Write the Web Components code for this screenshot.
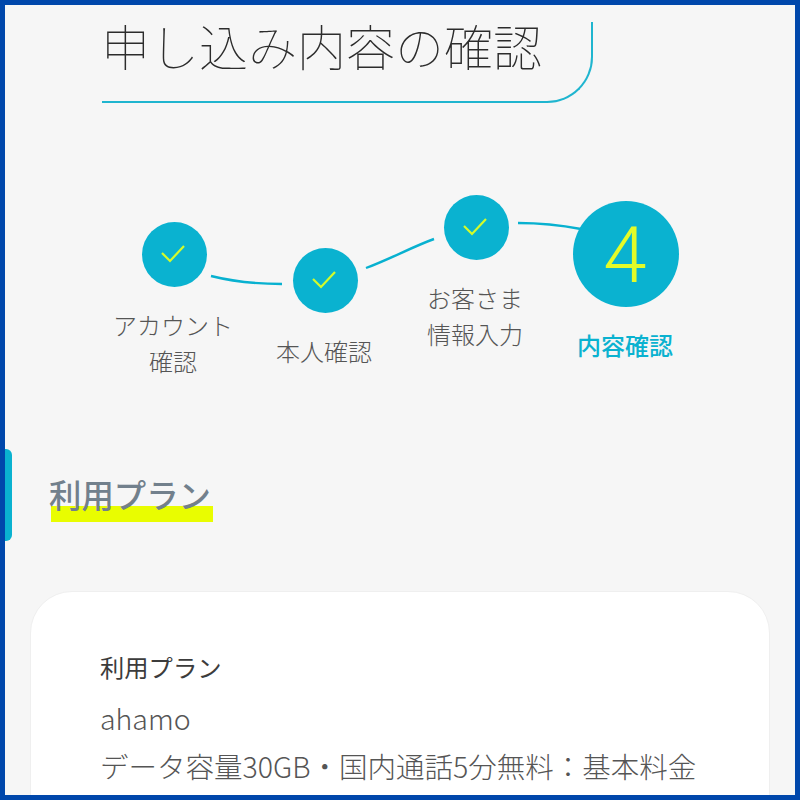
<!DOCTYPE html>
<html lang="ja">
<head>
<meta charset="utf-8">
<title>申し込み内容の確認</title>
<style>
  html, body { margin: 0; height: 100%; overflow: hidden; background: #f6f6f6; }
  body { font-family: "Noto Sans CJK JP", "Noto Sans", sans-serif; }
</style>
</head>
<body>
<app-frame>
  <page-title>申し込み内容の確認</page-title>
  <step-track>
    <step-node cx="174" cy="254" done><span>アカウント<br>確認</span></step-node>
    <step-node cx="325" cy="280" done><span>本人確認</span></step-node>
    <step-node cx="476" cy="227" done><span>お客さま<br>情報入力</span></step-node>
    <step-node cx="626" cy="254" num="4"><span>内容確認</span></step-node>
  </step-track>
  <section-heading>利用プラン</section-heading>
  <plan-card heading="利用プラン">
    <div>ahamo</div>
    <div>データ容量30GB・国内通話5分無料：基本料金</div>
  </plan-card>
</app-frame>

<script>
class AppFrame extends HTMLElement {
  connectedCallback() {
    this.attachShadow({ mode: 'open' });
    this.shadowRoot.innerHTML = `
      <style>
        :host {
          display: block;
          box-sizing: border-box;
          width: 800px;
          height: 800px;
          overflow: hidden;
          border: 5px solid #0047ab;
          background: #f6f6f6;
        }
      </style>
      <slot></slot>
    `;
  }
}

class PageTitle extends HTMLElement {
  connectedCallback() {
    this.attachShadow({ mode: 'open' });
    this.shadowRoot.innerHTML = `
      <style>
        :host {
          display: block;
          box-sizing: border-box;
          width: 491px;
          height: 81px;
          margin: 17px 0 0 97px;
          border-right: 2px solid #1fb5cf;
          border-bottom: 2px solid #1fb5cf;
          border-bottom-right-radius: 46px;
          font-size: 49px;
          font-weight: 100;
          line-height: 46px;
          text-indent: -1px;
          color: #2c2c2c;
          white-space: nowrap;
        }
      </style>
      <slot></slot>
    `;
  }
}

class StepTrack extends HTMLElement {
  connectedCallback() {
    this.attachShadow({ mode: 'open' });
    this.shadowRoot.innerHTML = `
      <style>
        :host {
          display: block;
          position: relative;
          height: 346px;
        }
        svg { position: absolute; left: -5px; top: -103px; }
      </style>
      <svg width="800" height="450" viewBox="0 0 800 450" fill="none" stroke="#08b1d0" stroke-width="2.4">
        <path d="M211 276 C235 282 258 284 282 284"/>
        <path d="M366 268 C390 259 412 247 434 239"/>
        <path d="M518 223 C540 223 560 225 581 229"/>
      </svg>
      <slot></slot>
    `;
  }
}

class StepNode extends HTMLElement {
  connectedCallback() {
    const cx = +this.getAttribute('cx');
    const cy = +this.getAttribute('cy');
    const num = this.getAttribute('num');
    const r = num ? 53 : 32.5;
    this.attachShadow({ mode: 'open' });
    this.shadowRoot.innerHTML = `
      <style>
        :host {
          display: flex;
          flex-direction: column;
          align-items: center;
          position: absolute;
          left: ${cx - 5 - 90}px;
          top: ${cy - 103 - r}px;
          width: 180px;
        }
        .dot {
          display: flex;
          align-items: center;
          justify-content: center;
          box-sizing: border-box;
          width: ${r * 2}px;
          height: ${r * 2}px;
          padding: ${num ? 3 : 0}px 2px 0 0;
          border-radius: 50%;
          background: #0ab2d0;
          color: #e3fb28;
          font-family: Roboto, sans-serif;
          font-size: 78px;
          font-weight: 300;
          line-height: 1;
        }
        .label {
          margin-top: 20px;
          margin-left: -2px;
          font-size: 24px;
          line-height: 36.5px;
          text-align: center;
          font-weight: ${num ? 500 : 300};
          color: ${num ? '#0ab2d0' : '#555'};
        }
      </style>
      <div class="dot">${num || `
        <svg width="24" height="18" viewBox="0 0 24 18" fill="none" stroke="#d4fb2a" stroke-width="2.2">
          <path d="M1 8 L9 16 L23 1"/>
        </svg>`}</div>
      <div class="label"><slot></slot></div>
    `;
  }
}

class SectionHeading extends HTMLElement {
  connectedCallback() {
    this.attachShadow({ mode: 'open' });
    this.shadowRoot.innerHTML = `
      <style>
        :host {
          display: flex;
          align-items: center;
          gap: 37px;
          height: 92px;
        }
        .tab {
          width: 7px;
          height: 92px;
          border-radius: 0 6px 6px 0;
          background: #0ab2d0;
        }
        .text {
          width: 164px;
          margin-top: 4px;
          font-size: 32.4px;
          line-height: 46px;
          font-weight: 500;
          color: #72808c;
          white-space: nowrap;
          background: linear-gradient(#e9fd00, #e9fd00) no-repeat 2px 35px / 163px 16px;
          padding-bottom: 6px;
        }
      </style>
      <div class="tab"></div>
      <div class="text"><slot></slot></div>
    `;
  }
}

class PlanCard extends HTMLElement {
  connectedCallback() {
    this.attachShadow({ mode: 'open' });
    this.shadowRoot.innerHTML = `
      <style>
        :host {
          display: block;
          box-sizing: border-box;
          width: 740px;
          height: 300px;
          margin: 50px 0 0 25px;
          padding: 57px 40px 0 69px;
          border: 1px solid #efefef;
          border-radius: 42px;
          background: #fff;
        }
        h3 {
          margin: 0 0 9px;
          font-size: 24.3px;
          line-height: 36px;
          font-weight: 400;
          color: #3c3c3c;
        }
        .body {
          font-size: 28.5px;
          line-height: 48px;
          font-weight: 300;
          color: #555;
          white-space: nowrap;
        }
      </style>
      <h3>${this.getAttribute('heading')}</h3>
      <div class="body"><slot></slot></div>
    `;
  }
}

customElements.define('app-frame', AppFrame);
customElements.define('page-title', PageTitle);
customElements.define('step-track', StepTrack);
customElements.define('step-node', StepNode);
customElements.define('section-heading', SectionHeading);
customElements.define('plan-card', PlanCard);
</script>
</body>
</html>
